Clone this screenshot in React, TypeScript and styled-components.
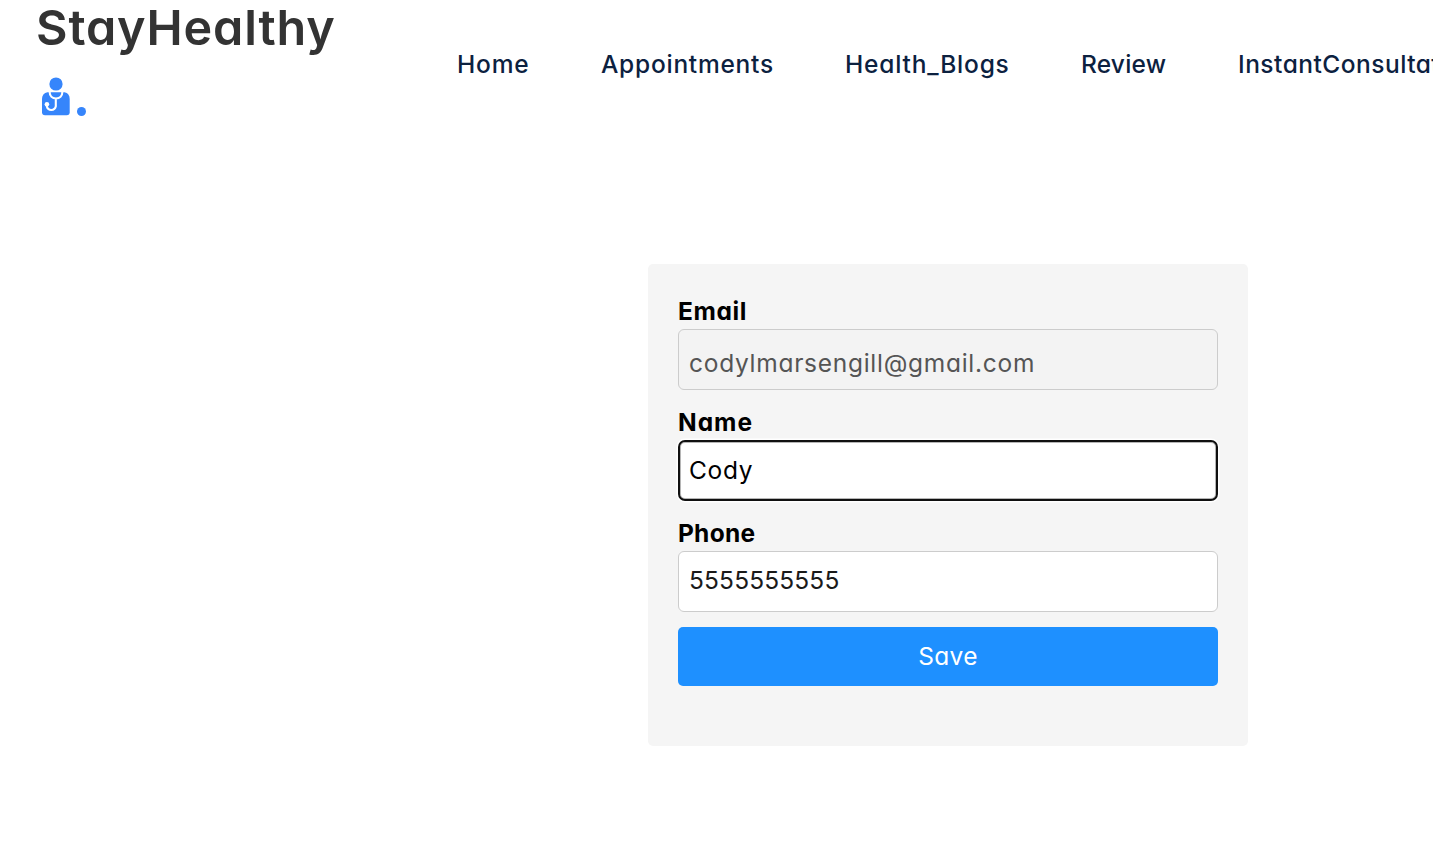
import React from 'react';
import styled, { createGlobalStyle } from 'styled-components';

const GlobalStyle = createGlobalStyle`
  body {
    margin: 0;
    overflow: hidden;
    background: #fff;
  }
  body, input, button {
    font-family: Inter, 'Open Sans', sans-serif;
    font-feature-settings: 'cv11';
  }
`;

const Page = styled.div`
  width: 1433px;
  height: 868px;
  overflow: hidden;
`;

const Navbar = styled.nav`
  display: flex;
  height: 128px;
  padding-left: 36px;
`;

const Brand = styled.a`
  display: flex;
  flex-direction: column;
  flex: 0 0 421px;
  color: #333;
  font-size: 48.5px;
  font-weight: 600;
  line-height: 56px;
  letter-spacing: 0.85px;
`;

const BrandMark = styled.span`
  display: flex;
  align-items: flex-end;
  gap: 7px;
  height: 60px;
  padding-left: 5px;
  box-sizing: border-box;
`;

const Dot = styled.span`
  width: 9px;
  height: 9px;
  border-radius: 50%;
  background: #3685fb;
`;

const NavLinks = styled.ul`
  display: flex;
  flex: none;
  margin: 0;
  padding: 0;
  list-style: none;
`;

const NavItem = styled.li<{ $width: number; $tracking: number }>`
  flex: 0 0 ${(p) => p.$width}px;
  color: #0c213f;
  font-size: 24.5px;
  font-weight: 450;
  line-height: 128px;
  white-space: nowrap;
  letter-spacing: ${(p) => p.$tracking}px;
`;

const ProfileForm = styled.form`
  display: flex;
  flex-direction: column;
  box-sizing: border-box;
  width: 600px;
  height: 482px;
  margin: 136px 0 0 648px;
  padding: 30px;
  border-radius: 5px;
  background: #f5f5f5;
`;

const Field = styled.label<{ $tracking: number }>`
  display: flex;
  flex-direction: column;
  height: 111px;
  color: #000;
  font-size: 24.5px;
  font-weight: 700;
  line-height: 35px;
  letter-spacing: ${(p) => p.$tracking}px;
`;

const TextInput = styled.input<{ $focused?: boolean; $tracking: number; $top?: number; $bottom?: number }>`
  box-sizing: border-box;
  width: 540px;
  height: 61px;
  margin: 0;
  padding: ${(p) => p.$top ?? 0}px 10px ${(p) => p.$bottom ?? 0}px;
  border: 1px solid #ccc;
  border-radius: 6px;
  outline: none;
  background: #fff;
  color: ${(p) => (p.$focused ? '#000' : '#1a1a1a')};
  font-size: 24.5px;
  font-weight: 380;
  letter-spacing: ${(p) => p.$tracking}px;
  ${(p) =>
    p.$focused &&
    'border: 2px solid #101010; border-radius: 7px; padding-left: 9px; box-shadow: inset 0 0 0 1px #b5b5b5, 0 0 0 1.5px #fff;'}

  &:disabled {
    background: #f3f3f3;
    color: #555;
  }
`;

const SaveButton = styled.button`
  height: 59px;
  margin: 0;
  padding: 0 0 2px;
  border: 0;
  border-radius: 5px;
  background: #1e90ff;
  color: #fff;
  font-size: 24.5px;
  letter-spacing: 0.3px;
`;

const DoctorIcon = () => (
  <svg width="29" height="40" viewBox="0 0 29 40" fill="none">
    <circle cx="15" cy="8" r="6.6" fill="#3685fb" />
    <path
      d="M6.5 16.3H23.5Q28.7 17.5 28.7 23V36.3Q28.7 39.3 25.7 39.3H4Q1 39.3 1 36.3V23Q1 17.5 6.5 16.3Z"
      fill="#3685fb"
    />
    <path d="M8.6 15.5C8.6 20 11.5 22.5 15 22.5S21.4 20 21.4 15.5M14.8 22.5V30.3A4.6 4.6 0 0 1 5.8 30.3V28.5" stroke="#fff" strokeWidth="2.1" />
    <circle cx="5.9" cy="28.2" r="2.3" fill="#fff" />
  </svg>
);

const links = [
  { label: 'Home', width: 144, tracking: 0.8 },
  { label: 'Appointments', width: 244, tracking: 0.75 },
  { label: 'Health_Blogs', width: 236, tracking: 0.8 },
  { label: 'Review', width: 157, tracking: 0.2 },
  { label: 'InstantConsultation', width: 260, tracking: 0.48 },
];

export default function App() {
  return (
    <Page>
      <GlobalStyle />
      <Navbar>
        <Brand>
          StayHealthy
          <BrandMark>
            <DoctorIcon />
            <Dot />
          </BrandMark>
        </Brand>
        <NavLinks>
          {links.map((l) => (
            <NavItem key={l.label} $width={l.width} $tracking={l.tracking}>
              {l.label}
            </NavItem>
          ))}
        </NavLinks>
      </Navbar>
      <ProfileForm>
        <Field $tracking={0.6}>
          Email
          <TextInput disabled $tracking={0.72} $top={6} defaultValue="codylmarsengill@gmail.com" />
        </Field>
        <Field $tracking={1}>
          Name
          <TextInput $focused $tracking={0.7} $bottom={2} defaultValue="Cody" />
        </Field>
        <Field $tracking={0.25}>
          Phone
          <TextInput $tracking={0.15} $bottom={4} defaultValue="5555555555" />
        </Field>
        <SaveButton type="button">Save</SaveButton>
      </ProfileForm>
    </Page>
  );
}
